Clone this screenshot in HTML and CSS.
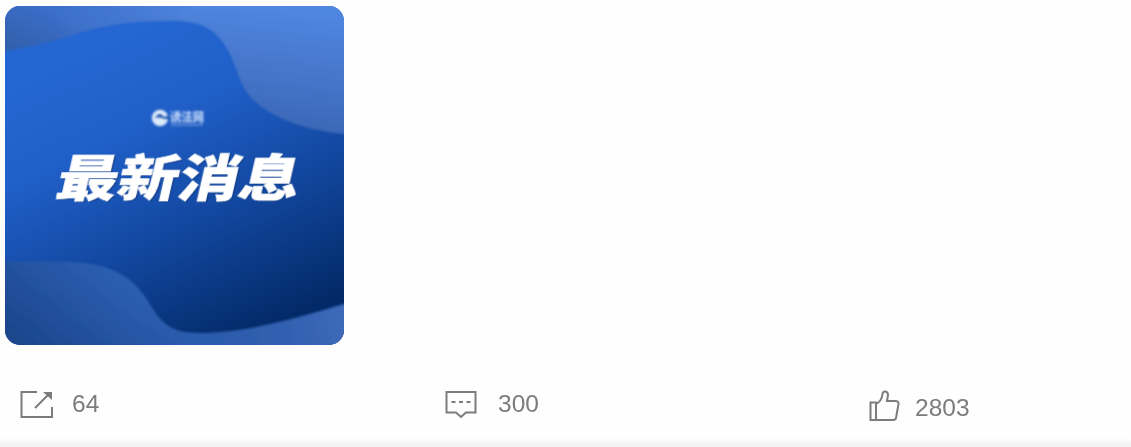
FILE: index.html
```html
<!DOCTYPE html>
<html lang="zh-CN">
<head>
<meta charset="utf-8">
<title>最新消息</title>
<link rel="stylesheet" href="styles.css">
</head>
<body>
<article class="post">
  <div class="cover">
    <svg class="cover-art" viewBox="0 0 350 350">
      <defs>
        <linearGradient id="base" gradientUnits="userSpaceOnUse" x1="110" y1="40" x2="250" y2="335">
          <stop offset="0" stop-color="#2466d2"/><stop offset=".28" stop-color="#205fc8"/><stop offset=".62" stop-color="#12479f"/><stop offset="1" stop-color="#032a68"/>
        </linearGradient>
        <linearGradient id="top" gradientUnits="userSpaceOnUse" x1="240" y1="5" x2="225" y2="130">
          <stop offset="0" stop-color="#5086e0"/><stop offset="1" stop-color="#3b65b4"/>
        </linearGradient>
        <linearGradient id="left" gradientUnits="userSpaceOnUse" x1="20" y1="52" x2="40" y2="4">
          <stop offset="0" stop-color="#3260ac"/><stop offset="1" stop-color="#3b6fca"/>
        </linearGradient>
        <linearGradient id="fade" x1="0" x2="1"><stop offset=".3" stop-color="#fff"/><stop offset="1" stop-color="#000"/></linearGradient>
        <mask id="left-mask" maskUnits="userSpaceOnUse" x="-5" y="-5" width="190" height="60"><rect x="-5" y="-5" width="190" height="60" fill="url(#fade)"/></mask>
        <linearGradient id="bottom" gradientUnits="userSpaceOnUse" x1="30" y1="345" x2="95" y2="262">
          <stop offset="0" stop-color="#1d468e"/><stop offset="1" stop-color="#2c5eb0"/>
        </linearGradient>
        <linearGradient id="corner" gradientUnits="userSpaceOnUse" x1="140" y1="345" x2="340" y2="310">
          <stop offset="0" stop-color="#234f9c" stop-opacity="0"/><stop offset="1" stop-color="#3d69b9"/>
        </linearGradient>
        <filter id="edge" x="-5%" y="-5%" width="110%" height="110%"><feGaussianBlur stdDeviation=".8"/></filter>
      </defs>
      <rect width="350" height="350" fill="url(#base)"/>
      <g filter="url(#edge)">
        <path fill="url(#top)" d="M-5-5H355V135C325 133 285 126 258 104C236 87 239 62 221 40C207 23 191 21 168 21C133 21 100 25 70 36C45 44 25 47-5 53Z"/>
        <path fill="url(#left)" mask="url(#left-mask)" d="M-5-5H180V21C133 21 100 25 70 36C45 44 25 47-5 53Z"/>
        <path fill="url(#bottom)" d="M-5 263C25 260 58 261 84 263C113 266 133 278 146 298C157 315 163 328 185 332C230 337 284 322 355 301V355H-5Z"/>
        <path fill="url(#corner)" d="M140 290C157 315 163 328 185 332C230 337 284 322 355 301V355H140Z"/>
      </g>
      <g class="brand">
        <circle cx="160" cy="118" r="8.200"/>
        <path class="brand-cut" d="M155 118C158 113 161 113 164 117L170 115L169 119C164 120 160 116 155 118Z"/>
        <text x="170" y="122" textLength="34" lengthAdjust="spacingAndGlyphs">诱法网</text>
        <path class="brand-line" d="M171 125H203"/>
      </g>
      <text class="headline shadow" transform="translate(55.500 197.500) skewX(-13)" textLength="243" lengthAdjust="spacingAndGlyphs">最新消息</text>
      <text class="headline" transform="translate(54 196.500) skewX(-13)" textLength="243" lengthAdjust="spacingAndGlyphs">最新消息</text>
    </svg>
  </div>
  <footer class="actions">
    <div class="action share">
      <svg class="icon" width="34" height="30" viewBox="0 0 34 30"><path d="M17 2H1.500V27H32V17M15 18L30 3"/><path class="arrow-head" d="M23 2H32V10Z"/></svg>
      <span>64</span>
    </div>
    <div class="action comment">
      <svg class="icon" width="32" height="30" viewBox="0 0 32 30"><path d="M1.500 2H30.500V22.500H21L16 27L11 22.500H1.500Z"/><path d="M6.500 12H10.500M14 12H18M21.500 12H25.500"/></svg>
      <span>300</span>
    </div>
    <div class="action like">
      <svg class="icon" width="31" height="34" viewBox="0 0 31 34"><path d="M1.500 12.500H7V30H1.500ZM7 14C11 12 13 9 13.500 4C14 0 19 1 19 5L18 11H26Q30 11 29.500 14L27 28Q26.500 30 24 30H7"/></svg>
      <span>2803</span>
    </div>
  </footer>
  <div class="divider"></div>
</article>
</body>
</html>
```
FILE: styles.css
```css
* { box-sizing: border-box; }
body {
  margin: 0;
  background: #fefefe;
  font-family: "Liberation Sans", "Noto Sans CJK SC", sans-serif;
}
.post {
  display: flex;
  flex-direction: column;
  height: 447px;
  padding-top: 6px;
  overflow: hidden;
}
.cover {
  width: 339px;
  height: 339px;
  margin-left: 4.500px;
  border-radius: 15px;
  overflow: hidden;
  flex: none;
}
.cover-art {
  display: block;
  width: 350px;
  height: 350px;
  margin: -6px 0 0 -4.500px;
}
.brand { fill: #dce9fa; filter: blur(.8px); }
.brand-cut { fill: #295ab0; }
.brand-line { stroke: #8db0e8; stroke-width: 1; }
.brand text { font: 900 12px "Noto Sans CJK SC", sans-serif; fill: #b8d0f4; }
.headline {
  font: 900 50px "Noto Sans CJK SC", sans-serif;
  fill: #fff;
  stroke: #fff;
  stroke-width: .5;
  filter: blur(.6px);
}
.headline.shadow { fill: #15408d; stroke: none; }
.actions {
  display: grid;
  grid-template-columns: 425px 424px 1fr;
  height: 98px;
  padding: 45px 0 0 20px;
}
.action {
  display: flex;
  align-items: flex-start;
  color: #7c7c7c;
  font-size: 24.500px;
  line-height: 28px;
  filter: blur(.6px);
}
.icon {
  fill: none;
  stroke: #7c7c7c;
  stroke-width: 2;
  flex: none;
}
.arrow-head { fill: #7c7c7c; stroke: none; }
.share span { margin-left: 18px; }
.comment span { margin-left: 21px; }
.like span { margin: 4px 0 0 15px; }
.divider {
  height: 10px;
  background: linear-gradient(#fefefe, #f4f4f4 65%);
}
```
